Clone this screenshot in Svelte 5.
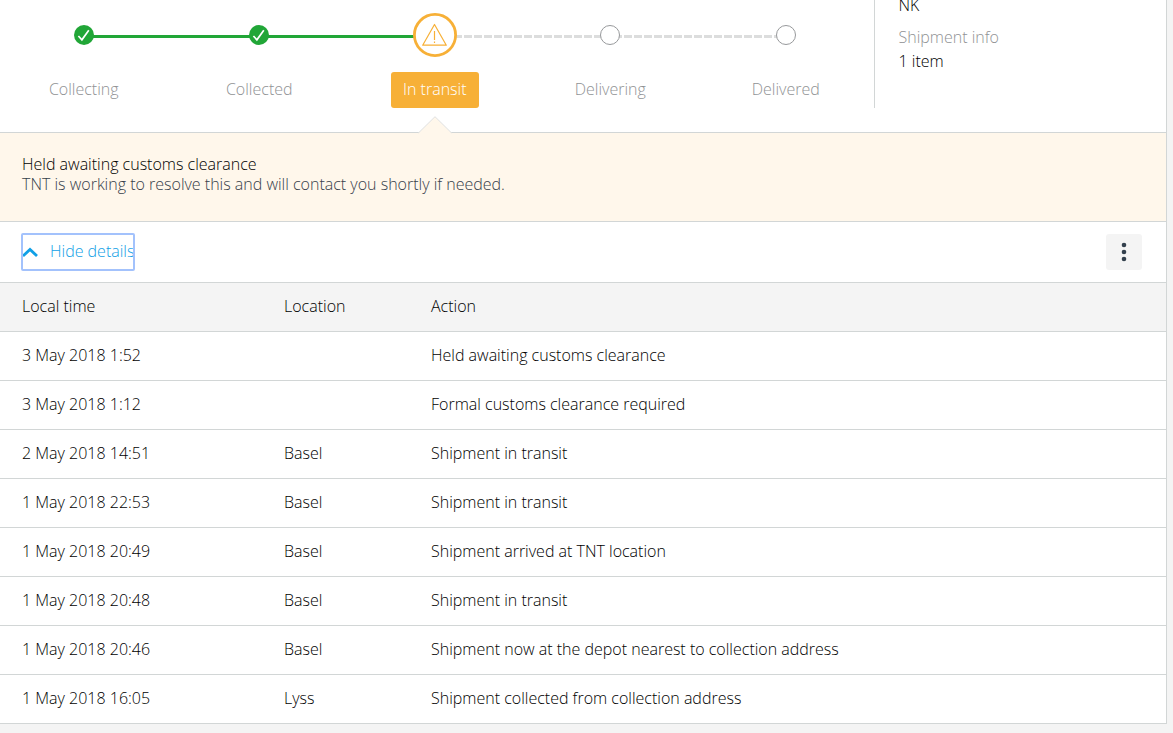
<script>
  let showDetails = true;

  const steps = [
    { label: 'Collecting', state: 'done' },
    { label: 'Collected', state: 'done' },
    { label: 'In transit', state: 'warning' },
    { label: 'Delivering', state: 'todo' },
    { label: 'Delivered', state: 'todo' }
  ];

  const events = [
    { time: '3 May 2018 1:52', location: '', action: 'Held awaiting customs clearance' },
    { time: '3 May 2018 1:12', location: '', action: 'Formal customs clearance required' },
    { time: '2 May 2018 14:51', location: 'Basel', action: 'Shipment in transit' },
    { time: '1 May 2018 22:53', location: 'Basel', action: 'Shipment in transit' },
    { time: '1 May 2018 20:49', location: 'Basel', action: 'Shipment arrived at TNT location' },
    { time: '1 May 2018 20:48', location: 'Basel', action: 'Shipment in transit' },
    { time: '1 May 2018 20:46', location: 'Basel', action: 'Shipment now at the depot nearest to collection address' },
    { time: '1 May 2018 16:05', location: 'Lyss', action: 'Shipment collected from collection address' }
  ];

  $: current = steps.findIndex((s) => s.state === 'warning');
  $: progress = (current / (steps.length - 1)) * 100;

  function toggleDetails() {
    showDetails = !showDetails;
  }
</script>

<main class="shipment">
  <header class="summary">
    <div class="progress">
      <div class="track">
        <div class="track-fill" style="width: {progress}%"></div>
      </div>
      <ol class="steps">
        {#each steps as step (step.label)}
          <li class="step {step.state}">
            <div class="marker">
              {#if step.state === 'done'}
                <svg width="20" height="20" viewBox="0 0 20 20" aria-hidden="true">
                  <circle cx="10" cy="10" r="10" fill="#21a637" />
                  <path d="M4.4 11 L7.9 14.8 L14.8 5.2" fill="none" stroke="#fff" stroke-width="1.7" />
                </svg>
              {:else if step.state === 'warning'}
                <svg width="44" height="44" viewBox="0 0 44 44" aria-hidden="true">
                  <circle cx="22" cy="22" r="20.6" fill="#fff" stroke="#f7b037" stroke-width="2.8" />
                  <path d="M21.5 11.5 L33.3 32.2 H9.7 Z" fill="none" stroke="#f7b037" stroke-width="1.2" stroke-linejoin="round" />
                  <path d="M21.5 18 V27 M21.5 28.6 V30" fill="none" stroke="#f7b037" stroke-width="1.2" />
                </svg>
              {:else}
                <svg width="20" height="20" viewBox="0 0 20 20" aria-hidden="true">
                  <circle cx="10" cy="10" r="9.5" fill="#fff" stroke="#97999b" stroke-width="1" />
                </svg>
              {/if}
            </div>
            <span class="label">{step.label}</span>
            {#if step.state === 'warning'}
              <svg class="pointer" width="34" height="18" viewBox="0 0 34 18" aria-hidden="true">
                <path d="M0 18 V17 L1 16.5 L17 0.7 L33 16.5 L34 17 V18 Z" fill="#fff7eb" />
                <path d="M0.5 16.9 L17 0.7 L33.5 16.9" fill="none" stroke="#dfe1e1" />
              </svg>
            {/if}
          </li>
        {/each}
      </ol>
    </div>
    <dl class="info">
      <dd>NK</dd>
      <dt>Shipment info</dt>
      <dd>1 item</dd>
    </dl>
  </header>

  <section class="alert">
    <p class="alert-title">Held awaiting customs clearance</p>
    <p>TNT is working to resolve this and will contact you shortly if needed.</p>
  </section>

  <div class="toolbar">
    <button class="toggle" type="button" aria-expanded={showDetails} on:click={toggleDetails}>
      <svg class:closed={!showDetails} width="16" height="12" viewBox="0 0 16 12" aria-hidden="true">
        <path d="M1 10 L8 3.4 L15 10" fill="none" stroke="#10a0e6" stroke-width="2.8" />
      </svg>
      <span>{showDetails ? 'Hide details' : 'Show details'}</span>
    </button>
    <button class="menu" type="button" aria-label="More options">
      <svg width="6" height="20" viewBox="0 0 6 20" aria-hidden="true">
        <circle cx="3" cy="3" r="2.3" />
        <circle cx="3" cy="10" r="2.3" />
        <circle cx="3" cy="17" r="2.3" />
      </svg>
    </button>
  </div>

  {#if showDetails}
    <table>
      <thead>
        <tr>
          <th class="col-time" scope="col">Local time</th>
          <th class="col-location" scope="col">Location</th>
          <th scope="col">Action</th>
        </tr>
      </thead>
      <tbody>
        {#each events as event (event.time)}
          <tr>
            <td>{event.time}</td>
            <td>{event.location}</td>
            <td>{event.action}</td>
          </tr>
        {/each}
      </tbody>
    </table>
  {/if}
</main>

<style>
  :global(body) {
    background: #f4f4f4;
    overflow: hidden;
  }
  .shipment {
    margin: 0 6px 0 -4px;
    border-right: 1px solid #d2d6d6;
    background: #fff;
    color: #000;
    font-family: 'Open Sans', 'Noto Sans', sans-serif;
    font-size: 16px;
    font-weight: 300;
    line-height: 24px;
  }

  /* Summary: progress steps and shipment info */
  .summary {
    display: flex;
    padding-bottom: 24px;
    border-bottom: 1px solid #d2d6d6;
  }
  .progress {
    position: relative;
    width: 75%;
  }
  .track {
    position: absolute;
    top: 35px;
    left: 10%;
    right: 10%;
    height: 3px;
    background: repeating-linear-gradient(to right, #dcdddd 0 8px, transparent 8px 10px);
  }
  .track-fill { height: 100%; background: #21a637; }
  .steps {
    position: relative;
    display: flex;
    margin: 0;
    padding: 12px 0 0;
    list-style: none;
  }
  .step {
    position: relative;
    display: flex;
    flex: 1;
    flex-direction: column;
    align-items: center;
    gap: 14px;
    color: #909294;
  }
  .marker {
    display: flex;
    align-items: center;
    height: 46px;
  }
  .label {
    padding: 5px 12px 7px;
    border-radius: 3px;
    white-space: nowrap;
  }
  .warning .label { background: #f7b037; color: #fff; }
  .pointer {
    position: absolute;
    top: 100%;
    margin-top: 8px;
  }
  svg { display: block; flex: none; }
  .info {
    width: 25%;
    margin: 0;
    padding-left: 24px;
    border-left: 1px solid #d2d6d6;
    box-sizing: border-box;
  }
  .info dt { margin-top: 8px; color: #909294; }
  .info dd { margin: 0; }
  .info dd:first-child { margin-top: -7px; }

  .alert {
    padding: 21px 26px 27px;
    border-bottom: 1px solid #d2d6d6;
    background: #fff7eb;
    color: #36404a;
    line-height: 20px;
  }
  .alert p { margin: 0; }
  .alert .alert-title { color: #000; }

  .toolbar {
    display: flex;
    justify-content: space-between;
    padding: 12px 24px 12px 26px;
    border-bottom: 1px solid #d2d6d6;
  }
  button {
    height: 36px;
    padding: 0;
    border: 0;
    font: inherit;
    cursor: pointer;
  }
  .toggle {
    display: flex;
    align-items: center;
    gap: 12px;
    border-radius: 1px;
    outline: 2px solid #a3c2fc;
    outline-offset: -1px;
    background: transparent;
    color: #10a0e6;
  }
  .toggle span { padding-bottom: 2px; }
  .toggle .closed { transform: rotate(180deg); }
  .menu {
    display: flex;
    align-items: center;
    justify-content: center;
    width: 36px;
    border-radius: 3px;
    background: #f4f4f4;
  }
  .menu svg { fill: #33404d; }

  table {
    width: 100%;
    border-collapse: separate;
    border-spacing: 0;
    table-layout: fixed;
  }
  th, td {
    padding: 11px 26px 13px;
    border-bottom: 1px solid #d2d6d6;
    font-weight: 300;
    text-align: left;
    white-space: nowrap;
  }
  th { background: #f4f4f4; }
  .col-time { width: 210px; }
  .col-location { width: 95px; }
</style>
